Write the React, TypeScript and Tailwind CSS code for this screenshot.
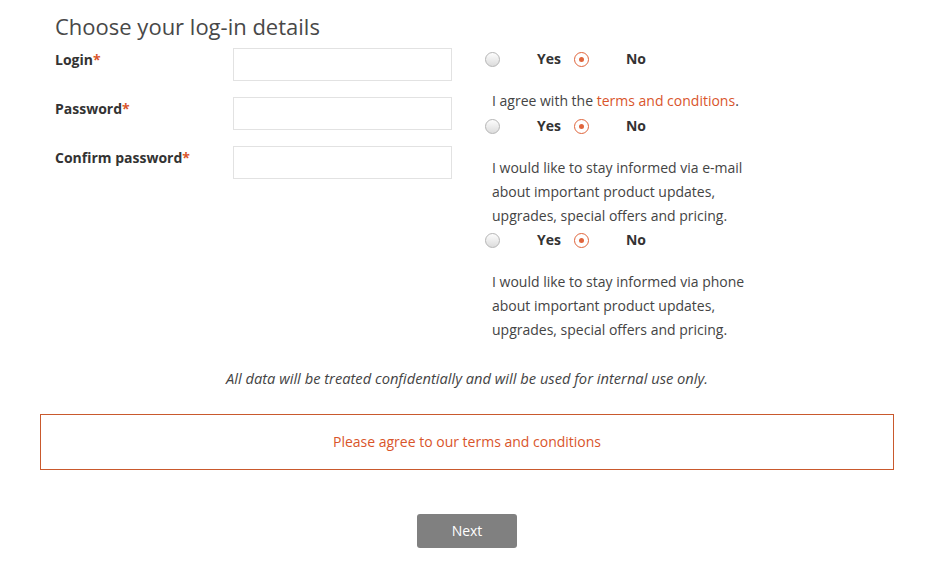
const ORANGE = 'text-[#d9552b]';

const Radio = ({ checked }: { checked?: boolean }) =>
    checked ? (
        <span className="flex h-[15px] w-[15px] items-center justify-center rounded-full border border-[#e0653c] bg-white">
            <span className="h-[5px] w-[5px] rounded-full bg-[#e0653c]" />
        </span>
    ) : (
        <span className="h-[15px] w-[15px] rounded-full border border-[#b5b5b5] bg-gradient-to-b from-[#fdfdfd] to-[#dcdcdc]" />
    );

const YesNo = ({ className = '' }: { className?: string }) => (
    <div className={`flex h-[22px] items-center text-sm font-bold text-[#333] ${className}`}>
        <Radio />
        <span className="ml-[37px]">Yes</span>
        <span className="ml-[13px]">
            <Radio checked />
        </span>
        <span className="ml-[37px]">No</span>
    </div>
);

const fields = ['Login', 'Password', 'Confirm password'];

export default function App() {
    return (
        <div className="min-h-[561px] w-[952px] bg-white font-['Open_Sans',sans-serif] text-[#444]">
            <div className="ml-[40px] w-[854px]">
                <h1 className="pl-[15px] pt-[11px] text-[22px] leading-[30px] text-[#484848]">Choose your log-in details</h1>
                <div className="mt-[7px] flex">
                    {/* left: credentials */}
                    <div className="flex w-[445px] flex-col gap-4 pl-[15px]">
                        {fields.map((f) => (
                            <div key={f} className="flex">
                                <label className="w-[178px] text-sm font-bold leading-6 text-[#333]">
                                    {f}
                                    <span className={ORANGE}>*</span>
                                </label>
                                <input className="h-[33px] w-[219px] border border-[#e2e2e2] bg-white outline-none" />
                            </div>
                        ))}
                    </div>

                    {/* right: agreements */}
                    <div className="text-sm leading-6 text-[#444]">
                        <YesNo />
                        <p className="mt-[19px] pl-[7px]">
                            I agree with the <span className={ORANGE}>terms and conditions</span>.
                        </p>
                        <YesNo className="mt-[2px]" />
                        <p className="mt-[19px] w-[270px] pl-[7px]">
                            I would like to stay informed via e-mail about important product updates, upgrades, special offers and pricing.
                        </p>
                        <YesNo className="mt-[1px]" />
                        <p className="mt-[19px] w-[270px] pl-[7px]">
                            I would like to stay informed via phone about important product updates, upgrades, special offers and pricing.
                        </p>
                    </div>
                </div>

                <p className="mt-[24px] text-center text-[14.7px] italic leading-6 text-[#444]">
                    All data will be treated confidentially and will be used for internal use only.
                </p>

                <div className={`mt-[24px] flex h-[56px] items-center justify-center border border-[#c9592d] text-sm ${ORANGE}`}>
                    Please agree to our terms and conditions
                </div>

                <div className="mt-[44px] flex justify-center">
                    <button className="h-[34px] w-[100px] rounded-[3px] bg-[#808080] text-sm text-white">Next</button>
                </div>
            </div>
        </div>
    );
}
